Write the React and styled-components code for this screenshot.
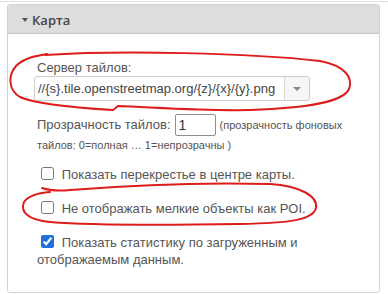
import React from "react";
import styled, { createGlobalStyle } from "styled-components";

const GlobalStyle = createGlobalStyle`
  body {
    margin: 0;
    background: #fff;
    font-family: "Liberation Sans", Arial, sans-serif;
  }
`;

export default function App() {
  return (
    <>
      <GlobalStyle />
      <Page>
        <TopRule />
        <Panel>
          <Header>
            <Caret />
            <Title>Карта</Title>
          </Header>
          <Body>
            <FieldLabel>Сервер тайлов:</FieldLabel>
            <SelectBox>
              <SelectValue>//{"{s}"}.tile.openstreetmap.org/{"{z}"}/{"{x}"}/{"{y}"}.png</SelectValue>
              <SelectArrow>
                <ArrowGlyph />
              </SelectArrow>
            </SelectBox>
            <OpacityRow>
              <span>Прозрачность тайлов:</span>
              <NumberInput type="text" defaultValue="1" />
              <Hint>(прозрачность фоновых</Hint>
            </OpacityRow>
            <HintLine>тайлов: 0=полная … 1=непрозрачны )</HintLine>
            <Checks>
              <CheckRow>
                <Checkbox type="checkbox" />{" "}Показать перекрестье в центре карты.
              </CheckRow>
              <CheckRow>
                <Checkbox type="checkbox" />{" "}Не отображать мелкие объекты как POI.
              </CheckRow>
              <CheckRow>
                <Checkbox type="checkbox" defaultChecked />{" "}Показать статистику по загруженным и
                отображаемым данным.
              </CheckRow>
            </Checks>
          </Body>
        </Panel>
        <Marks viewBox="0 0 388 294" width="388" height="294">
          <path d="M45 55 C120 50 250 53 320 61 C346 66 353 78 349 89 C343 102 310 108 250 110 C200 111 150 107 118 106 L113 110 C80 108 35 104 20 97 C8 90 8 75 16 66 C24 58 35 56 47 54" />
          <path d="M42 188 C48 190 60 191 70 190 C120 186 200 182 270 184 C300 186 318 196 316 208 C313 220 290 223 240 224 C180 225 100 226 50 222 C28 220 20 212 24 202 C28 196 38 193 50 192" />
        </Marks>
      </Page>
    </>
  );
}

const Page = styled.div`
  position: relative;
  width: 388px;
  height: 294px;
  padding-top: 1px;
  box-sizing: border-box;
  overflow: hidden;
`;

const TopRule = styled.div`
  height: 1px;
  background: #e2e2e2;
`;

const Panel = styled.section`
  margin: 2px 0 0 7px;
  width: 373px;
  border: 1px solid #d3d3d3;
  border-radius: 3px;
  box-sizing: border-box;
  overflow: hidden;
`;

const Header = styled.div`
  display: flex;
  align-items: center;
  gap: 4px;
  height: 28px;
  padding-left: 14px;
  background: #dddddd;
  border-bottom: 1px solid #c5c5c5;
`;

const Caret = styled.span`
  width: 0;
  height: 0;
  margin-top: 1px;
  border-left: 3.5px solid transparent;
  border-right: 3.5px solid transparent;
  border-top: 4px solid #555;
`;

const Title = styled.span`
  font-family: "Open Sans", "Liberation Sans", sans-serif;
  font-size: 13px;
  font-weight: 600;
  color: #454545;
  margin-top: 1px;
`;

const Body = styled.div`
  padding: 26px 30px 24px 26px;
  font-size: 13px;
  color: #555;
`;

const FieldLabel = styled.div`
  padding-left: 3px;
  line-height: 16px;
`;

const SelectBox = styled.div`
  display: flex;
  width: 276px;
  height: 25px;
  box-sizing: border-box;
  border: 1px solid #cccccc;
  border-radius: 3px;
  overflow: hidden;
`;

const SelectValue = styled.div`
  flex: 1;
  padding-left: 3px;
  line-height: 23px;
  color: #444;
  white-space: nowrap;
`;

const SelectArrow = styled.div`
  display: flex;
  align-items: center;
  justify-content: center;
  width: 24px;
  background: #f6f6f6;
  border-left: 1px solid #d6d6d6;
`;

const ArrowGlyph = styled.span`
  width: 0;
  height: 0;
  border-left: 4px solid transparent;
  border-right: 4px solid transparent;
  border-top: 4px solid #888;
`;

const OpacityRow = styled.div`
  display: flex;
  align-items: center;
  gap: 4px;
  height: 22px;
  margin-top: 13px;
  padding-left: 3px;
  line-height: 16px;
`;

const NumberInput = styled.input`
  width: 41px;
  height: 22px;
  box-sizing: border-box;
  margin: 0;
  padding: 0 3px;
  border: 1px solid #8f8f8f;
  border-radius: 2px;
  font-family: "Liberation Sans", Arial, sans-serif;
  font-size: 14px;
  color: #333;
`;

const Hint = styled.span`
  font-size: 11px;
`;

const HintLine = styled.div`
  margin-top: 2px;
  padding-left: 3px;
  font-size: 11px;
  line-height: 14px;
`;

const Checks = styled.div`
  display: flex;
  flex-direction: column;
  gap: 17px;
  margin-top: 14px;
`;

const CheckRow = styled.label`
  display: block;
  padding-left: 3px;
  line-height: 17px;
`;

const Checkbox = styled.input`
  width: 13px;
  height: 13px;
  margin: 0 4px 0 4px;
  vertical-align: -1px;
  accent-color: #1f6fdc;
`;

const Marks = styled.svg`
  position: absolute;
  top: 0;
  left: 0;
  pointer-events: none;
  fill: none;
  stroke: #dd1c1c;
  stroke-width: 2;
  stroke-linecap: round;
  stroke-linejoin: round;
`;
